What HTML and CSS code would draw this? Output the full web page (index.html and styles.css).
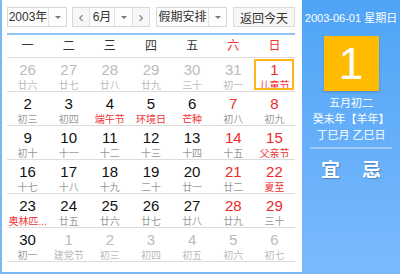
FILE: index.html
```html
<!DOCTYPE html>
<html lang="zh-CN">
<head>
    <meta charset="UTF-8">
    <title>万年历</title>
    <link rel="stylesheet" href="styles.css">
</head>
<body>

<div class="calendar">
    <div class="main">
        <div class="toolbar">
            <div class="select year">
                <span class="value">2003年</span>
                <span class="arrow"><i></i></span>
            </div>
            <div class="select month">
                <span class="step">&lsaquo;</span>
                <span class="value">6月</span>
                <span class="arrow"><i></i></span>
                <span class="step">&rsaquo;</span>
            </div>
            <div class="select holiday">
                <span class="value">假期安排</span>
                <span class="arrow"><i></i></span>
            </div>
            <button class="today-btn">返回今天</button>
        </div>

        <div class="week">
            <span>一</span><span>二</span><span>三</span><span>四</span><span>五</span>
            <span class="weekend">六</span><span class="weekend">日</span>
        </div>

        <div class="days" id="days"></div>
    </div>

    <div class="side">
        <div class="side-date">2003-06-01 星期日</div>
        <div class="big-day">1</div>
        <div class="lunar-info">
            <p>五月初二</p>
            <p>癸未年【羊年】</p>
            <p>丁巳月 乙巳日</p>
        </div>
        <div class="yiji">
            <span>宜</span>
            <span>忌</span>
        </div>
    </div>
</div>

<script>
    // day, lunar text, flags: o = other month, r = red number, f = festival text, t = today
    const days = [
        ['26', '廿六', 'o'], ['27', '廿七', 'o'], ['28', '廿八', 'o'], ['29', '廿九', 'o'],
        ['30', '三十', 'o'], ['31', '初一', 'o'], ['1', '儿童节', 'rft'],
        ['2', '初三', ''], ['3', '初四', ''], ['4', '端午节', 'f'], ['5', '环境日', 'f'],
        ['6', '芒种', 'f'], ['7', '初八', 'r'], ['8', '初九', 'r'],
        ['9', '初十', ''], ['10', '十一', ''], ['11', '十二', ''], ['12', '十三', ''],
        ['13', '十四', ''], ['14', '十五', 'r'], ['15', '父亲节', 'rf'],
        ['16', '十七', ''], ['17', '十八', ''], ['18', '十九', ''], ['19', '二十', ''],
        ['20', '廿一', ''], ['21', '廿二', 'r'], ['22', '夏至', 'rf'],
        ['23', '奥林匹...', 'f'], ['24', '廿五', ''], ['25', '廿六', ''], ['26', '廿七', ''],
        ['27', '廿八', ''], ['28', '廿九', 'r'], ['29', '三十', 'r'],
        ['30', '初一', ''], ['1', '建党节', 'o'], ['2', '初三', 'o'], ['3', '初四', 'o'],
        ['4', '初五', 'o'], ['5', '初六', 'o'], ['6', '初七', 'o']
    ];

    const container = document.getElementById('days');
    days.forEach(function (d) {
        const cell = document.createElement('div');
        cell.className = 'day';
        if (d[2].includes('o')) cell.classList.add('other');
        if (d[2].includes('r')) cell.classList.add('red');
        if (d[2].includes('f')) cell.classList.add('festival');
        if (d[2].includes('t')) cell.classList.add('today');
        cell.innerHTML = '<span class="num">' + d[0] + '</span><span class="lunar">' + d[1] + '</span>';
        container.appendChild(cell);
    });
</script>

</body>
</html>
```

FILE: styles.css
```css
* {
    box-sizing: border-box;
}
body {
    margin: 0;
    font-family: "Liberation Sans", "Noto Sans CJK SC", sans-serif;
    background-color: #fff;
}
.calendar {
    display: flex;
    width: 400px;
    height: 274px;
    border-left: 2px solid #7cb8f8;
    border-bottom: 2px solid #7cb8f8;
    overflow: hidden;
}
.main {
    width: 300px;
    flex-shrink: 0;
    padding: 7px 7px 0 5px;
    background-color: #fff;
}
.toolbar {
    display: flex;
    height: 20px;
    font-size: 12px;
    color: #333;
}
.select {
    display: flex;
    height: 20px;
    border: 1px solid #d7d7d7;
    background-color: #fdfdfd;
}
.select .value {
    flex: 1;
    text-align: center;
    line-height: 18px;
}
.select .arrow {
    width: 18px;
    border-left: 1px solid #e2e2e2;
    display: flex;
    align-items: center;
    justify-content: center;
}
.select .arrow i {
    width: 0;
    height: 0;
    border-left: 3px solid transparent;
    border-right: 3px solid transparent;
    border-top: 3px solid #777;
}
.year {
    width: 60px;
    margin-right: 5px;
}
.month {
    width: 78px;
    margin-right: 6px;
}
.month .step {
    width: 17px;
    text-align: center;
    line-height: 17px;
    font-size: 15px;
    color: #777;
    background-color: #f7f7f7;
}
.month .step:first-child {
    border-right: 1px solid #e2e2e2;
}
.month .step:last-child {
    border-left: 1px solid #e2e2e2;
}
.holiday {
    width: 71px;
    margin-right: 6px;
}
.today-btn {
    width: 62px;
    height: 20px;
    padding: 0;
    border: 1px solid #dcdcdc;
    background-color: #f6f6f6;
    font-family: inherit;
    font-size: 12px;
    color: #333;
}
.week {
    display: grid;
    grid-template-columns: repeat(7, 1fr);
    margin-top: 6px;
    border-top: 2px solid #8fc2f5;
    border-bottom: 1px solid #dcdcdc;
    height: 25px;
    line-height: 22px;
    font-size: 12px;
    color: #333;
    text-align: center;
}
.week .weekend {
    color: #e33;
}
.days {
    display: grid;
    grid-template-columns: repeat(7, 1fr);
    grid-auto-rows: 34px;
}
.day {
    display: flex;
    flex-direction: column;
    align-items: center;
    border-bottom: 1px solid #dcdcdc;
    padding-top: 3px;
    position: relative;
}
.day .num {
    font-size: 15px;
    line-height: 18px;
    color: #111;
}
.day .lunar {
    font-size: 10px;
    line-height: 13px;
    color: #999;
    white-space: nowrap;
}
.day.red .num {
    color: #ee2a2a;
}
.day.festival .lunar {
    color: #e33;
}
.day.other .num {
    color: #bbb;
}
.day.other .lunar {
    color: #bbb;
}
.day.today::after {
    content: "";
    position: absolute;
    left: 0;
    right: 1px;
    top: 1px;
    bottom: 1px;
    border: 2px solid #fdb615;
}
.side {
    flex: 1;
    background: linear-gradient(to bottom, #4fa4f6, #7abafd);
    color: #fff;
    text-align: center;
    padding-top: 11px;
}
.side-date {
    font-size: 11px;
    line-height: 14px;
}
.big-day {
    width: 55px;
    height: 55px;
    margin: 11px auto 0;
    background-color: #ffbb00;
    box-shadow: 0 1px 2px rgba(0, 0, 0, 0.2);
    font-size: 44px;
    line-height: 55px;
    font-weight: 300;
}
.lunar-info {
    margin-top: 4px;
    font-size: 11px;
    line-height: 16px;
}
.lunar-info p {
    margin: 0;
}
.yiji {
    margin: 4px 8px 0;
    border-top: 2px solid rgba(255, 255, 255, 0.35);
    display: flex;
    justify-content: space-around;
    padding-top: 6px;
    font-size: 19px;
    font-weight: bold;
    text-shadow: 1px 1px 1px rgba(0, 0, 0, 0.25);
}
```
